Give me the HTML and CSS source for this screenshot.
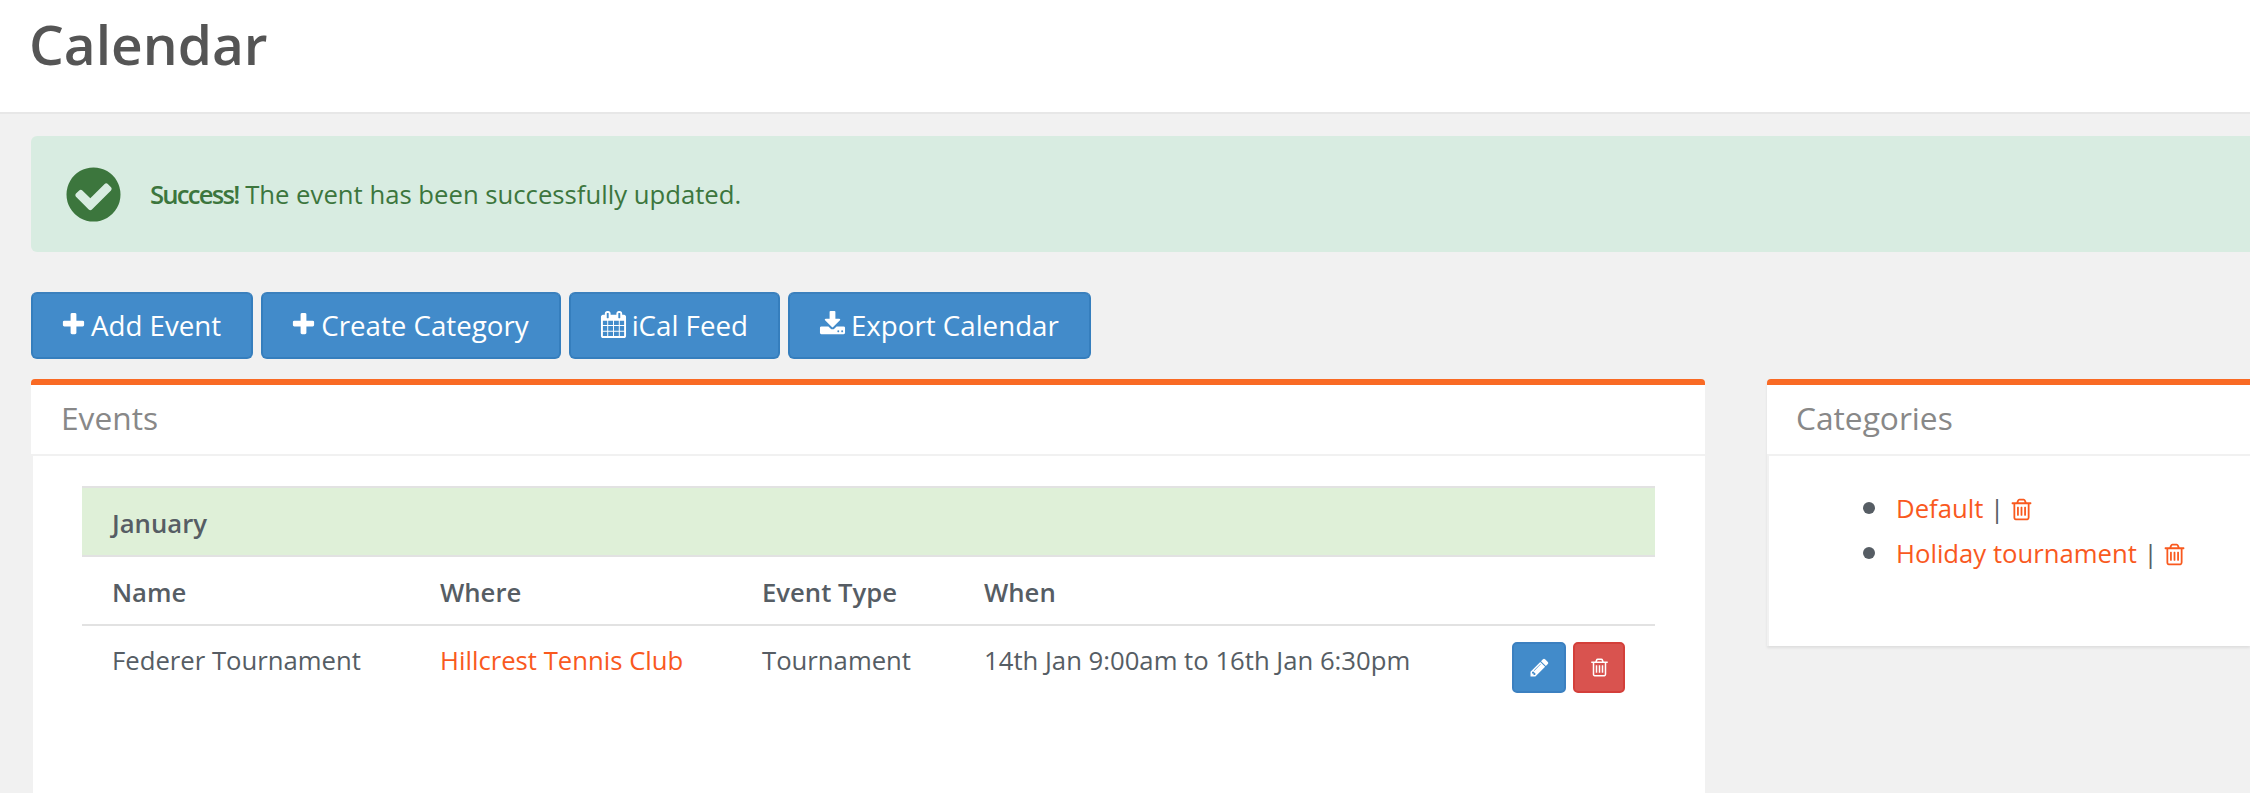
FILE: index.html
```html
<!DOCTYPE html>
<html lang="en">
<head>
  <meta charset="UTF-8">
  <title>Calendar</title>
  <link rel="stylesheet" href="styles.css">
</head>
<body>
  <svg class="icon-defs" xmlns="http://www.w3.org/2000/svg">
    <symbol id="i-plus" viewBox="0 0 1792 1792"><path d="M1600 736v192q0 40-28 68t-68 28h-416v416q0 40-28 68t-68 28h-192q-40 0-68-28t-28-68v-416h-416q-40 0-68-28t-28-68v-192q0-40 28-68t68-28h416v-416q0-40 28-68t68-28h192q40 0 68 28t28 68v416h416q40 0 68 28t28 68z"/></symbol>
    <symbol id="i-check" viewBox="0 0 1792 1792"><path d="M1412 734q0-28-18-46l-91-90q-19-19-45-19t-45 19l-408 407-226-226q-19-19-45-19t-45 19l-91 90q-18 18-18 46 0 27 18 45l362 362q19 19 45 19 27 0 46-19l543-543q18-18 18-45zm252 162q0 209-103 385.5t-279.5 279.5-385.5 103-385.5-103-279.5-279.5-103-385.5 103-385.5 279.5-279.5 385.5-103 385.5 103 279.5 279.5 103 385.5z"/></symbol>
    <symbol id="i-download" viewBox="0 0 1792 1792"><path d="M1344 1344q0-26-19-45t-45-19-45 19-19 45 19 45 45 19 45-19 19-45zm256 0q0-26-19-45t-45-19-45 19-19 45 19 45 45 19 45-19 19-45zm128-224v320q0 40-28 68t-68 28h-1472q-40 0-68-28t-28-68v-320q0-40 28-68t68-28h465l135 136q58 56 136 56t136-56l136-136h464q40 0 68 28t28 68zm-325-569q17 41-14 70l-448 448q-18 19-45 19t-45-19l-448-448q-31-29-14-70 17-39 59-39h256v-448q0-26 19-45t45-19h256q26 0 45 19t19 45v448h256q42 0 59 39z"/></symbol>
    <symbol id="i-pencil" viewBox="0 0 1792 1792"><path d="M491 1536l91-91-235-235-91 91v107h128v128h107zm523-928q0-22-22-22-10 0-17 7l-542 542q-7 7-7 17 0 22 22 22 10 0 17-7l542-542q7-7 7-17zm-54-192l416 416-832 832h-416v-416zm683 96q0 53-37 90l-166 166-416-416 166-165q36-38 90-38 53 0 91 38l235 234q37 39 37 91z"/></symbol>
    <symbol id="i-trash" viewBox="0 0 1792 1792"><path d="M704 736v576q0 14-9 23t-23 9h-64q-14 0-23-9t-9-23v-576q0-14 9-23t23-9h64q14 0 23 9t9 23zm256 0v576q0 14-9 23t-23 9h-64q-14 0-23-9t-9-23v-576q0-14 9-23t23-9h64q14 0 23 9t9 23zm256 0v576q0 14-9 23t-23 9h-64q-14 0-23-9t-9-23v-576q0-14 9-23t23-9h64q14 0 23 9t9 23zm128 724v-948h-896v948q0 22 7 40.5t14.5 27 10.5 8.5h832q3 0 10.5-8.5t14.5-27 7-40.5zm-672-1076h448l-48-117q-7-9-17-11h-317q-10 2-17 11zm928 32v64q0 14-9 23t-23 9h-96v948q0 83-47 143.5t-113 60.5h-832q-66 0-113-58.5t-47-141.5v-952h-96q-14 0-23-9t-9-23v-64q0-14 9-23t23-9h309l70-167q15-37 54-63t79-26h320q40 0 79 26t54 63l70 167h309q14 0 23 9t9 23z"/></symbol>
    <symbol id="i-calendar" viewBox="0 0 1792 1792"><path d="M192 1664h288v-288h-288v288zm352 0h320v-288h-320v288zm-352-352h288v-320h-288v320zm352 0h320v-320h-320v320zm-352-384h288v-288h-288v288zm736 736h320v-288h-320v288zm-384-736h320v-288h-320v288zm768 736h288v-288h-288v288zm-384-352h320v-320h-320v320zm-352-864v-288q0-13-9.5-22.5t-22.5-9.5h-64q-13 0-22.5 9.5t-9.5 22.5v288q0 13 9.5 22.5t22.5 9.5h64q13 0 22.5-9.5t9.5-22.5zm736 864h288v-320h-288v320zm-384-384h320v-288h-320v288zm384 0h288v-288h-288v288zm32-480v-288q0-13-9.5-22.5t-22.5-9.5h-64q-13 0-22.5 9.5t-9.5 22.5v288q0 13 9.5 22.5t22.5 9.5h64q13 0 22.5-9.5t9.5-22.5zm384-64v1280q0 52-38 90t-90 38h-1408q-52 0-90-38t-38-90v-1280q0-52 38-90t90-38h128v-96q0-66 47-113t113-47h64q66 0 113 47t47 113v96h384v-96q0-66 47-113t113-47h64q66 0 113 47t47 113v96h128q52 0 90 38t38 90z"/></symbol>
  </svg>

  <div class="page">
    <header class="page-header">
      <h1>Calendar</h1>
    </header>

    <main class="content">
      <div class="alert">
        <svg class="alert-icon"><use href="#i-check"/></svg>
        <p><strong>Success!</strong> The event has been successfully updated.</p>
      </div>

      <div class="toolbar">
        <a class="btn" href="#"><svg class="icon"><use href="#i-plus"/></svg>Add Event</a>
        <a class="btn" href="#"><svg class="icon"><use href="#i-plus"/></svg>Create Category</a>
        <a class="btn" href="#"><svg class="icon icon-wide"><use href="#i-calendar"/></svg>iCal Feed</a>
        <a class="btn" href="#"><svg class="icon icon-wide"><use href="#i-download"/></svg>Export Calendar</a>
      </div>

      <div class="columns">
        <section class="panel panel-events">
          <h2 class="panel-title">Events</h2>
          <div class="panel-body">
            <table class="events">
              <colgroup>
                <col class="col-name">
                <col class="col-where">
                <col class="col-type">
                <col>
                <col class="col-actions">
              </colgroup>
              <thead>
                <tr class="month"><th colspan="5">January</th></tr>
                <tr class="heads">
                  <th>Name</th>
                  <th>Where</th>
                  <th>Event Type</th>
                  <th>When</th>
                  <th></th>
                </tr>
              </thead>
              <tbody>
                <tr>
                  <td>Federer Tournament</td>
                  <td><a class="venue" href="#">Hillcrest Tennis Club</a></td>
                  <td>Tournament</td>
                  <td>14th Jan 9:00am to 16th Jan 6:30pm</td>
                  <td>
                    <div class="actions">
                      <a class="btn-small btn-edit" href="#"><svg><use href="#i-pencil"/></svg></a>
                      <a class="btn-small btn-delete" href="#"><svg><use href="#i-trash"/></svg></a>
                    </div>
                  </td>
                </tr>
              </tbody>
            </table>
          </div>
        </section>

        <section class="panel panel-categories">
          <h2 class="panel-title">Categories</h2>
          <div class="panel-body">
            <ul class="categories">
              <li><a href="#">Default</a> | <a href="#"><svg class="trash"><use href="#i-trash"/></svg></a></li>
              <li><a href="#">Holiday tournament</a> | <a href="#"><svg class="trash"><use href="#i-trash"/></svg></a></li>
            </ul>
          </div>
        </section>
      </div>
    </main>
  </div>
</body>
</html>
```
FILE: styles.css
```css
html, body {
  margin: 0;
  height: 100%;
  overflow: hidden;
}

body {
  font-family: "Open Sans", sans-serif;
  font-size: 25.7px;
  color: #565d64;
  background-color: #f1f1f1;
}

a {
  color: #f9591e;
  text-decoration: none;
}

.icon-defs {
  display: none;
}

.page-header {
  height: 112px;
  background-color: #fff;
  border-bottom: 2px solid #e7e7e7;
  padding-left: 29px;
}

.page-header h1 {
  margin: 0;
  font-size: 55px;
  font-weight: 600;
  line-height: 88px;
  color: #555;
}

.content {
  padding: 22px 0 0 31px;
}

/* success message */
.alert {
  display: flex;
  align-items: center;
  height: 116px;
  padding-left: 35px;
  background-color: #d8ece1;
  border-radius: 6px 0 0 6px;
  color: #3c763d;
}

.alert-icon {
  width: 63px;
  height: 63px;
  fill: #3c763d;
  flex: none;
  margin-right: 25px;
  margin-left: -4px;
}

.alert p {
  margin: 0;
}

.alert strong {
  font-weight: 600;
  letter-spacing: -1.8px;
}

/* buttons above the panels */
.toolbar {
  display: flex;
  gap: 8px;
  margin-top: 40px;
}

.btn {
  display: flex;
  align-items: center;
  height: 67px;
  box-sizing: border-box;
  padding: 0 30px 2px 27px;
  background-color: #428bca;
  border: 2px solid #357ebd;
  border-top-color: #3b80bd;
  border-radius: 6px;
  color: #fff;
  font-size: 27.7px;
}

.btn .icon {
  width: 27px;
  height: 27px;
  fill: #fff;
  margin-right: 4px;
}

.btn .icon-wide {
  margin-left: 2px;
  margin-right: 5px;
}

.columns {
  display: grid;
  grid-template-columns: 1674px 1fr;
  gap: 62px;
  margin-top: 20px;
}

.panel {
  background-color: #fff;
  border-top: 6px solid #f96a24;
  border-radius: 4px 0 0 0;
}

.panel-events {
  border-radius: 4px 4px 0 0;
}

.panel-title {
  margin: 0;
  height: 69px;
  padding-left: 30px;
  font-size: 31.7px;
  font-weight: 400;
  line-height: 66px;
  color: #888;
  border-bottom: 2px solid #f1f1f1;
}

.panel-body {
  border-left: 2px solid #f1f1f1;
  box-sizing: border-box;
  padding: 30px 50px 0 49px;
}

.panel-events .panel-body {
  height: 337px;
}

/* events table */
.events {
  width: 100%;
  border-collapse: collapse;
  table-layout: fixed;
}

.events th {
  text-align: left;
  font-weight: 600;
  padding: 3px 30px 0;
  height: 64px;
}

.events td {
  padding: 13px 30px 0;
  vertical-align: top;
  line-height: 44px;
  white-space: nowrap;
}

.month th {
  background-color: #dff0d8;
  border-top: 2px solid #e2e2e2;
  border-bottom: 2px solid #e2e2e2;
}

.heads th {
  border-bottom: 2px solid #e2e2e2;
}

.col-name {
  width: 328px;
}

.col-where {
  width: 322px;
}

.col-type {
  width: 222px;
}

.col-actions {
  width: 150px;
}

.venue {
  vertical-align: 1px;
}

.actions {
  display: flex;
  gap: 7px;
  justify-content: flex-end;
  margin: 3px 0 0 -60px;
}

.btn-small {
  display: flex;
  align-items: center;
  justify-content: center;
  height: 51px;
  box-sizing: border-box;
  border-radius: 5px;
  border: 2px solid;
}

.btn-small svg {
  width: 21px;
  height: 21px;
  fill: #fff;
}

.btn-edit {
  width: 54px;
  background-color: #428bca;
  border-color: #3b80c0;
}

.btn-delete {
  width: 52px;
  background-color: #d9534f;
  border-color: #d43f3a;
}

/* categories */
.panel-categories {
  align-self: start;
  box-shadow: 0 2px 3px rgba(0, 0, 0, 0.08);
}

.panel-categories .panel-body {
  height: 190px;
  padding: 30px 0 0;
}

.panel-categories .panel-title {
  padding-left: 29px;
}

.categories {
  margin: 0;
  padding-left: 94px;
  list-style: none;
}

.categories li {
  line-height: 45px;
}

.categories li::before {
  content: "";
  display: inline-block;
  width: 12px;
  height: 12px;
  margin-right: 21px;
  border-radius: 50%;
  background-color: #565d64;
  vertical-align: 4px;
}

.trash {
  width: 25px;
  height: 25px;
  margin-left: -2px;
  fill: #f9591e;
  vertical-align: -4px;
}
```
